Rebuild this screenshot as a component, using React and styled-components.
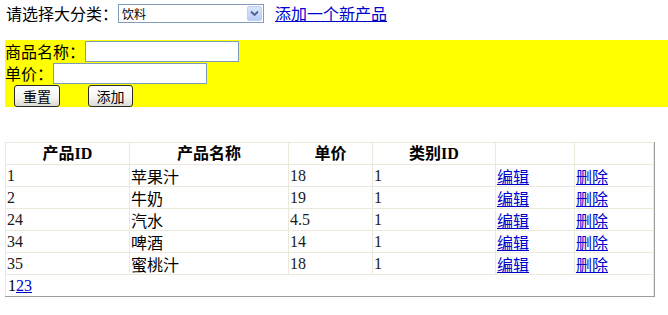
import React from 'react';
import styled, { createGlobalStyle } from 'styled-components';

const GlobalStyle = createGlobalStyle`
  body {
    margin: 0;
    padding: 0 0 0 5px;
    background: #fff;
    font-family: "Liberation Serif", "Noto Sans CJK SC", serif;
    font-size: 16px;
    color: #000;
  }
`;

const TopBar = styled.div`
  display: flex;
  align-items: center;
  height: 26px;
  padding-left: 1px;
  margin-bottom: 14px;
`;

const Label = styled.span`
  font-family: "Noto Sans CJK SC", sans-serif;
  font-size: 16px;
  line-height: 22px;
  white-space: nowrap;
`;

const FakeSelect = styled.div`
  display: flex;
  align-items: center;
  justify-content: space-between;
  box-sizing: border-box;
  width: 146px;
  height: 19px;
  border: 1px solid #7f9db9;
  background: #fff;
  font-family: "Noto Sans CJK SC", sans-serif;
  font-size: 12px;
  padding-left: 3px;
`;

const Arrow = styled.span`
  display: flex;
  align-items: center;
  justify-content: center;
  width: 15px;
  height: 15px;
  margin-right: 1px;
  border-radius: 2px;
  background: linear-gradient(#dbe6fd, #b8cdf7);
  border: 1px solid #bccff5;
  box-sizing: border-box;
`;

const Link = styled.a`
  color: #0000cc;
  text-decoration: underline;
  font-family: ${(p) => (p.$num ? '"Liberation Serif", serif' : '"Noto Sans CJK SC", sans-serif')};
  cursor: pointer;
`;

const TopLink = styled(Link)`
  margin-left: 11px;
  font-size: 16px;
`;

const AddPanel = styled.div`
  background: #ffff00;
  height: 67px;
  margin-bottom: 35px;
`;

const FieldRow = styled.div`
  display: flex;
  align-items: center;
  height: 22px;
`;

const TextBox = styled.input`
  box-sizing: border-box;
  width: ${(p) => p.$w}px;
  height: 21px;
  margin: 0;
  border: 1px solid #7f9db9;
  background: #fff;
  padding: 0 2px;
`;

const ButtonRow = styled.div`
  display: flex;
  align-items: center;
  height: 23px;
  padding-left: 9px;
  gap: 28px;
`;

const Button = styled.button`
  box-sizing: border-box;
  width: ${(p) => p.$w}px;
  height: 22px;
  margin: 0;
  padding: 0;
  border: 1px solid #2b2b2b;
  border-radius: 3px;
  background: linear-gradient(#ffffff 0%, #f4f4f0 60%, #dcdad0 100%);
  font-family: "Noto Sans CJK SC", sans-serif;
  font-size: 14px;
  color: #000;
`;

const GridFrame = styled.div`
  display: inline-block;
  border-right: 1px solid #9c9c9c;
  border-bottom: 1px solid #9c9c9c;
`;

const Grid = styled.table`
  border-collapse: collapse;
  table-layout: fixed;
  width: 648px;
`;

const HeadCell = styled.th`
  border: 1px solid #ebe9dc;
  height: 21px;
  padding: 0 1px;
  font-weight: bold;
  text-align: center;
  font-family: "Liberation Serif", "Noto Sans CJK SC", serif;
  line-height: 20px;
`;

const Cell = styled.td`
  border: 1px solid #ebe9dc;
  height: 21px;
  padding: 0 1px;
  text-align: left;
  line-height: 20px;
  white-space: nowrap;
  font-family: ${(p) => (p.$cjk ? '"Noto Sans CJK SC", sans-serif' : '"Liberation Serif", serif')};
  color: ${(p) => (p.$cjk ? '#000' : '#1a1a1a')};
`;

const PagerCell = styled.td`
  border: 1px solid #ebe9dc;
  border-bottom: none;
  height: 21px;
  padding: 0 2px;
  line-height: 20px;
  font-family: "Liberation Serif", serif;
`;

const products = [
  { id: 1, name: '苹果汁', price: '18', cat: 1 },
  { id: 2, name: '牛奶', price: '19', cat: 1 },
  { id: 24, name: '汽水', price: '4.5', cat: 1 },
  { id: 34, name: '啤酒', price: '14', cat: 1 },
  { id: 35, name: '蜜桃汁', price: '18', cat: 1 },
];

export default function App() {
  return (
    <>
      <GlobalStyle />
      <TopBar>
        <Label>请选择大分类：</Label>
        <FakeSelect>
          <span>饮料</span>
          <Arrow>
            <svg width="9" height="7" viewBox="0 0 9 7">
              <path d="M1 1.5 L4.5 5 L8 1.5" fill="none" stroke="#4d6185" strokeWidth="1.8" />
            </svg>
          </Arrow>
        </FakeSelect>
        <TopLink>添加一个新产品</TopLink>
      </TopBar>
      <AddPanel>
        <FieldRow>
          <Label>商品名称：</Label>
          <TextBox $w={154} />
        </FieldRow>
        <FieldRow>
          <Label>单价：</Label>
          <TextBox $w={154} />
        </FieldRow>
        <ButtonRow>
          <Button $w={46}>重置</Button>
          <Button $w={45}>添加</Button>
        </ButtonRow>
      </AddPanel>
      <GridFrame>
        <Grid>
          <colgroup>
            <col style={{ width: 124 }} />
            <col style={{ width: 159 }} />
            <col style={{ width: 84 }} />
            <col style={{ width: 123 }} />
            <col style={{ width: 79 }} />
            <col style={{ width: 79 }} />
          </colgroup>
          <thead>
            <tr>
              <HeadCell>产品ID</HeadCell>
              <HeadCell>产品名称</HeadCell>
              <HeadCell>单价</HeadCell>
              <HeadCell>类别ID</HeadCell>
              <HeadCell />
              <HeadCell />
            </tr>
          </thead>
          <tbody>
            {products.map((p) => (
              <tr key={p.id}>
                <Cell>{p.id}</Cell>
                <Cell $cjk>{p.name}</Cell>
                <Cell>{p.price}</Cell>
                <Cell>{p.cat}</Cell>
                <Cell $cjk>
                  <Link>编辑</Link>
                </Cell>
                <Cell $cjk>
                  <Link>删除</Link>
                </Cell>
              </tr>
            ))}
            <tr>
              <PagerCell colSpan={6}>
                <span>1</span>
                <Link $num>2</Link>
                <Link $num>3</Link>
              </PagerCell>
            </tr>
          </tbody>
        </Grid>
      </GridFrame>
    </>
  );
}
